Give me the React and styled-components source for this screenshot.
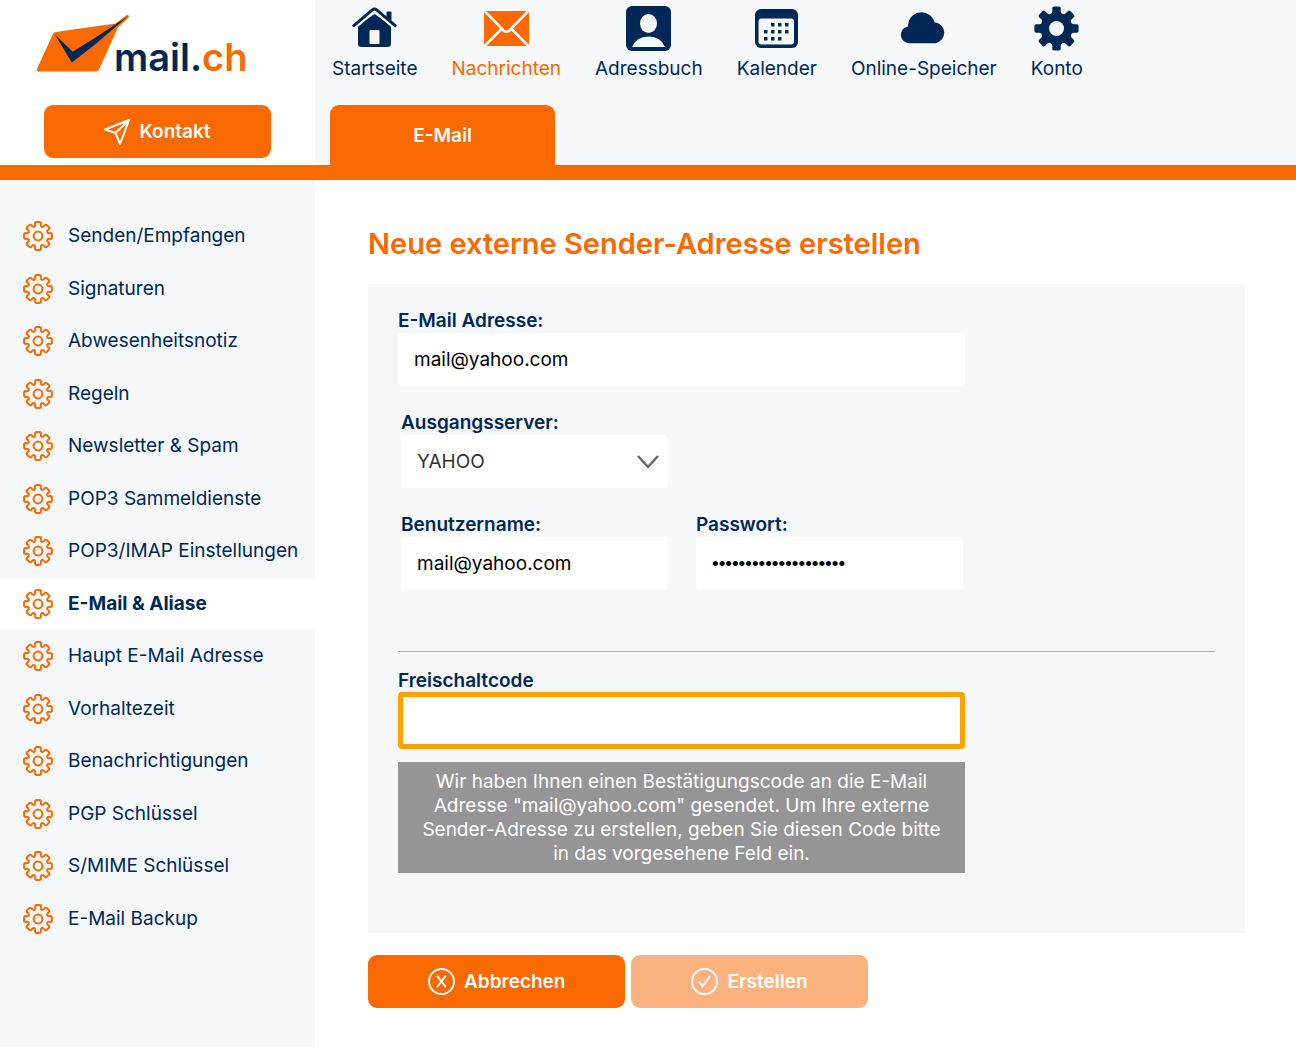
import { useState } from 'react';
import styled, { createGlobalStyle } from 'styled-components';

const orange = '#f86a00';
const navy = '#002856';
const light = '#f5f7f9';

const settings = [
  'Senden/Empfangen',
  'Signaturen',
  'Abwesenheitsnotiz',
  'Regeln',
  'Newsletter & Spam',
  'POP3 Sammeldienste',
  'POP3/IMAP Einstellungen',
  'E-Mail & Aliase',
  'Haupt E-Mail Adresse',
  'Vorhaltezeit',
  'Benachrichtigungen',
  'PGP Schlüssel',
  'S/MIME Schlüssel',
  'E-Mail Backup',
];

// closed outline with eight rounded teeth around (0, 0)
function gearPath(tip, root, tipAngle, rootAngle, round) {
  const points = [];
  for (let i = 0; i < 8; i++) {
    [[root, -rootAngle], [tip, -tipAngle], [tip, tipAngle], [root, rootAngle]].forEach(([r, a]) => {
      const rad = ((i * 45 + a) * Math.PI) / 180;
      points.push([r * Math.sin(rad), -r * Math.cos(rad)]);
    });
  }
  const toward = (p, q) => {
    const d = Math.hypot(q[0] - p[0], q[1] - p[1]);
    const t = Math.min(round / d, 0.5);
    return `${(p[0] + (q[0] - p[0]) * t).toFixed(2)} ${(p[1] + (q[1] - p[1]) * t).toFixed(2)}`;
  };
  const parts = points.map((p, i) => {
    const prev = points[(i + points.length - 1) % points.length];
    const next = points[(i + 1) % points.length];
    return `${i ? 'L' : 'M'}${toward(p, prev)}Q${p[0].toFixed(2)} ${p[1].toFixed(2)} ${toward(p, next)}`;
  });
  return parts.join('') + 'Z';
}

const outlineGear = gearPath(14.2, 10, 12, 16, 1.5);
const solidGear = gearPath(22.5, 16, 11, 15, 1.8);

function GearOutline() {
  return (
    <svg width="30" height="30" viewBox="-15 -15 30 30" fill="none" stroke={orange} strokeWidth="2" strokeLinejoin="round" aria-hidden="true">
      <path d={outlineGear} />
      <circle r="4.4" />
    </svg>
  );
}

function HomeIcon() {
  return (
    <svg width="45" height="45" viewBox="0 0 45 45" aria-hidden="true">
      <path d="M6 19 22.500 8 39 19v18.500q0 3.500-3.500 3.500h-26Q6 41 6 37.500z" fill="currentColor" />
      <path d="M1.500 20 20.500 4q2-1.600 4 0l19 16" fill="none" stroke={light} strokeWidth="7" />
      <path d="M1.800 19.600 20.600 3.700q1.900-1.500 3.800 0l18.800 15.900" fill="none" stroke="currentColor" strokeWidth="3" strokeLinecap="round" />
      <path d="M34.500 11V6.500q0-1 1-1h3q1 0 1 1V15z" fill="currentColor" />
      <rect x="17.500" y="24" width="10" height="14" rx="1" fill={light} />
    </svg>
  );
}

function EnvelopeIcon() {
  return (
    <svg width="45" height="45" viewBox="0 0 45 45" aria-hidden="true">
      <rect y="5" width="45" height="35" rx="1" fill="currentColor" />
      <path d="M0 4.500 19.500 24.500q3 2.800 6 0L45 4.500M0 40.500 17 23.500M45 40.500 28 23.500" fill="none" stroke={light} strokeWidth="2.600" />
    </svg>
  );
}

function ContactIcon() {
  return (
    <svg width="45" height="45" viewBox="0 0 45 45" aria-hidden="true">
      <rect width="45" height="45" rx="6" fill="currentColor" />
      <ellipse cx="22.500" cy="17.500" rx="8.500" ry="9.500" fill={light} />
      <path d="M6 41Q10 30.500 22.500 30.500T39 41z" fill={light} />
    </svg>
  );
}

function CalendarIcon() {
  const dots = [[16, 17], [23, 17], [30, 17], [9, 24], [16, 24], [23, 24], [30, 24], [9, 31], [16, 31], [23, 31]];
  return (
    <svg width="45" height="45" viewBox="0 0 45 45" aria-hidden="true">
      <rect x="1" y="3" width="43" height="39" rx="6" fill="currentColor" />
      <rect x="4.500" y="12.500" width="35.500" height="26" rx="3" fill={light} />
      {dots.map(([x, y]) => (
        <rect key={`${x}-${y}`} x={x + 1} y={y} width="3.500" height="3.500" fill="currentColor" />
      ))}
    </svg>
  );
}

function CloudIcon() {
  return (
    <svg width="45" height="45" viewBox="0 0 45 45" aria-hidden="true">
      <path d="M8.500 37.200A8.400 8.400 0 0 1 7 20.500 13.500 13.500 0 0 1 33.500 16.200 10.600 10.600 0 0 1 34.500 37.200z" fill="currentColor" />
    </svg>
  );
}

function AccountIcon() {
  return (
    <svg width="45" height="45" viewBox="-22.500 -22.500 45 45" aria-hidden="true">
      <path d={solidGear} fill="currentColor" />
      <circle r="7.500" fill={light} />
    </svg>
  );
}

const areas = [
  { name: 'Startseite', Icon: HomeIcon },
  { name: 'Nachrichten', Icon: EnvelopeIcon, active: true },
  { name: 'Adressbuch', Icon: ContactIcon },
  { name: 'Kalender', Icon: CalendarIcon },
  { name: 'Online-Speicher', Icon: CloudIcon },
  { name: 'Konto', Icon: AccountIcon },
];

export default function App() {
  const [email, setEmail] = useState('mail@yahoo.com');
  const [user, setUser] = useState('mail@yahoo.com');
  const [password, setPassword] = useState('abcdefghijklmnopqrst');
  const [code, setCode] = useState('');

  return (
    <>
      <GlobalStyle />
      <Page>
        <Header>
          <Brand>
            <Logo href="#" aria-label="mail.ch">
              <svg width="94" height="60" viewBox="36 14 94 60" aria-hidden="true">
                <path d="M55.500 32 115.500 23.600 126.500 15.300Q128.500 14.500 129 16.500 129 17.800 118 27.200L99 69.500Q98 71.500 96 71.500H38Q36 71.500 36.700 69.500L53 34Q53.800 32.300 55.500 32z" fill={orange} />
                <path d="M55 34.600 72.700 51.700 95 37.800 128.300 16 95 44.500 71.800 62.500z" fill={navy} />
              </svg>
              <Wordmark>mail.<b>ch</b></Wordmark>
            </Logo>
            <Button type="button">
              <svg width="26" height="26" viewBox="0 0 26 26" fill="none" stroke="#fff" strokeWidth="2" strokeLinejoin="round" aria-hidden="true">
                <path d="M25 1 1 10.500 11.500 14 16 25zM25 1 11.500 14" />
              </svg>
              Kontakt
            </Button>
          </Brand>
          <Top>
            <Nav>
              {areas.map(({ name, Icon, active }) => (
                <NavLink key={name} href="#" $active={active}>
                  <Icon />
                  {name}
                </NavLink>
              ))}
            </Nav>
            <Tab href="#">E-Mail</Tab>
          </Top>
        </Header>
        <Body>
          <Sidebar>
            <SettingsList>
              {settings.map((name) => (
                <SettingsItem key={name}>
                  <SettingsLink href="#" $active={name === 'E-Mail & Aliase'}>
                    <GearOutline />
                    {name}
                  </SettingsLink>
                </SettingsItem>
              ))}
            </SettingsList>
          </Sidebar>
          <Main>
            <Title>Neue externe Sender-Adresse erstellen</Title>
            <form>
              <Panel>
                <Field>
                  <label htmlFor="email">E-Mail Adresse:</label>
                  <Input id="email" type="email" value={email} onChange={(e) => setEmail(e.target.value)} />
                </Field>
                <Columns>
                  <Field>
                    <label htmlFor="server">Ausgangsserver:</label>
                    <SelectBox>
                      <Select id="server" defaultValue="YAHOO">
                        <option>YAHOO</option>
                      </Select>
                      <svg width="22" height="14" viewBox="0 0 22 14" fill="none" stroke="#666" strokeWidth="2.400" aria-hidden="true">
                        <path d="M1 1 11 12 21 1" />
                      </svg>
                    </SelectBox>
                  </Field>
                </Columns>
                <Columns>
                  <Field>
                    <label htmlFor="user">Benutzername:</label>
                    <Input id="user" value={user} onChange={(e) => setUser(e.target.value)} />
                  </Field>
                  <Field>
                    <label htmlFor="password">Passwort:</label>
                    <PasswordInput id="password" type="password" value={password} onChange={(e) => setPassword(e.target.value)} />
                  </Field>
                </Columns>
                <Divider />
                <Field $compact>
                  <label htmlFor="code">Freischaltcode</label>
                  <CodeInput id="code" value={code} onChange={(e) => setCode(e.target.value)} />
                </Field>
                <Hint>
                  Wir haben Ihnen einen Bestätigungscode an die E-Mail Adresse "mail@yahoo.com" gesendet. Um Ihre externe
                  Sender-Adresse zu erstellen, geben Sie diesen Code bitte in das vorgesehene Feld ein.
                </Hint>
              </Panel>
              <Actions>
                <Button type="button">
                  <svg width="27" height="27" viewBox="0 0 27 27" fill="none" stroke="#fff" strokeWidth="2" strokeLinecap="round" aria-hidden="true">
                    <circle cx="13.500" cy="13.500" r="12.500" />
                    <path d="M9.500 8.300 17.300 18.500M17.300 8.300 9.500 18.500" />
                  </svg>
                  Abbrechen
                </Button>
                <Button type="submit" disabled>
                  <svg width="27" height="27" viewBox="0 0 27 27" fill="none" stroke="#fff" strokeWidth="2" strokeLinecap="round" aria-hidden="true">
                    <circle cx="13.500" cy="13.500" r="12.500" />
                    <path d="M8.300 14 11.500 18.300 18.700 8.500" />
                  </svg>
                  Erstellen
                </Button>
              </Actions>
            </form>
          </Main>
        </Body>
      </Page>
    </>
  );
}

const GlobalStyle = createGlobalStyle`
  * {
    box-sizing: border-box;
  }

  body {
    margin: 0;
    background: #fff;
    color: ${navy};
    font-family: Inter, "Liberation Sans", sans-serif;
    font-size: 19px;
    line-height: 24px;
  }

  input, select, button {
    font: inherit;
  }

  a {
    color: inherit;
    text-decoration: none;
  }

  svg {
    display: block;
    flex: none;
  }
`;

const Page = styled.div`
  display: flex;
  flex-direction: column;
  min-height: 100vh;
`;

const Header = styled.header`
  display: grid;
  grid-template-columns: 315px 1fr;
  border-bottom: 15px solid ${orange};
`;

const Brand = styled.div`
  display: flex;
  flex-direction: column;
  justify-content: space-between;
  padding: 14px 44px 7px 36px;

  button {
    margin-left: 8px;
  }
`;

const Logo = styled.a`
  display: flex;
  align-items: flex-end;
  height: 60px;
`;

const Wordmark = styled.span`
  margin-left: -16px;
  font-size: 38px;
  font-weight: 600;
  line-height: 34px;

  b {
    color: ${orange};
    font-weight: 600;
  }
`;

const Top = styled.div`
  display: flex;
  flex-direction: column;
  align-items: flex-start;
  gap: 24px;
  padding: 6px 15px 0;
  background: ${light};
`;

const Nav = styled.nav`
  display: flex;
  gap: 34px;
  padding: 0 2px;
`;

const NavLink = styled.a`
  display: flex;
  flex-direction: column;
  align-items: center;
  gap: 6px;
  color: ${(props) => (props.$active ? orange : navy)};
  white-space: nowrap;
`;

const Tab = styled.a`
  width: 225px;
  padding: 19px 18px 17px;
  border-radius: 9px 9px 0 0;
  background: ${orange};
  color: #fff;
  font-weight: 600;
  text-align: center;
`;

const Body = styled.div`
  display: grid;
  flex: 1;
  grid-template-columns: 315px 1fr;
`;

const Sidebar = styled.aside`
  padding: 30px 0;
  background: ${light};
`;

const SettingsList = styled.ul`
  display: flex;
  flex-direction: column;
  min-height: 735px;
  margin: 0;
  padding: 0;
  list-style: none;
`;

const SettingsItem = styled.li`
  display: flex;
  flex: 1;
`;

const SettingsLink = styled.a`
  display: flex;
  flex: 1;
  align-items: center;
  gap: 15px;
  padding-left: 23px;
  background: ${(props) => (props.$active ? '#fff' : 'none')};
  font-weight: ${(props) => (props.$active ? 700 : 400)};
  white-space: nowrap;
`;

const Main = styled.main`
  padding: 46px 51px 39px 53px;
`;

const Title = styled.h1`
  margin: 0 0 22px;
  color: ${orange};
  font-size: 29px;
  font-weight: 600;
  line-height: 36px;
`;

const Panel = styled.div`
  padding: 25px 30px 60px;
  background: ${light};
`;

const Field = styled.div`
  display: flex;
  flex-direction: column;
  max-width: 567px;

  label {
    font-weight: 600;
    line-height: ${(props) => (props.$compact ? '22px' : '24px')};
  }
`;

const Columns = styled.div`
  display: grid;
  grid-template-columns: 267px 267px;
  gap: 28px;
  padding: 25px 0 0 3px;
`;

const Input = styled.input`
  width: 100%;
  height: 53px;
  padding: 0 16px;
  border: 0;
  border-radius: 4px;
  background: #fff;
  color: #000;
`;

const PasswordInput = styled(Input)`
  font-family: "Liberation Sans", sans-serif;
`;

const CodeInput = styled(Input)`
  height: 57px;
  border: 5px solid #ffa200;
`;

const SelectBox = styled.div`
  display: grid;
  align-items: center;

  select, svg {
    grid-area: 1 / 1;
  }

  svg {
    justify-self: end;
    margin-right: 9px;
    pointer-events: none;
  }
`;

const Select = styled.select`
  height: 53px;
  padding: 0 16px;
  border: 0;
  border-radius: 4px;
  background: #fff;
  color: #333;
  appearance: none;
`;

const Divider = styled.hr`
  margin: 61px 0 18px;
  border: 0;
  border-top: 1px solid #a5afba;
`;

const Hint = styled.p`
  max-width: 567px;
  margin: 13px 0 0;
  padding: 8px 15px 7px;
  background: #959595;
  color: #fff;
  text-align: center;
`;

const Actions = styled.div`
  display: flex;
  gap: 6px;
  padding-top: 22px;
`;

const Button = styled.button`
  display: flex;
  align-items: center;
  justify-content: center;
  gap: 9px;
  height: 53px;
  padding: 0 60px;
  border: 0;
  border-radius: 9px;
  background: ${orange};
  color: #fff;
  font-weight: 600;

  &:disabled {
    background: #fbb27f;
  }
`;
